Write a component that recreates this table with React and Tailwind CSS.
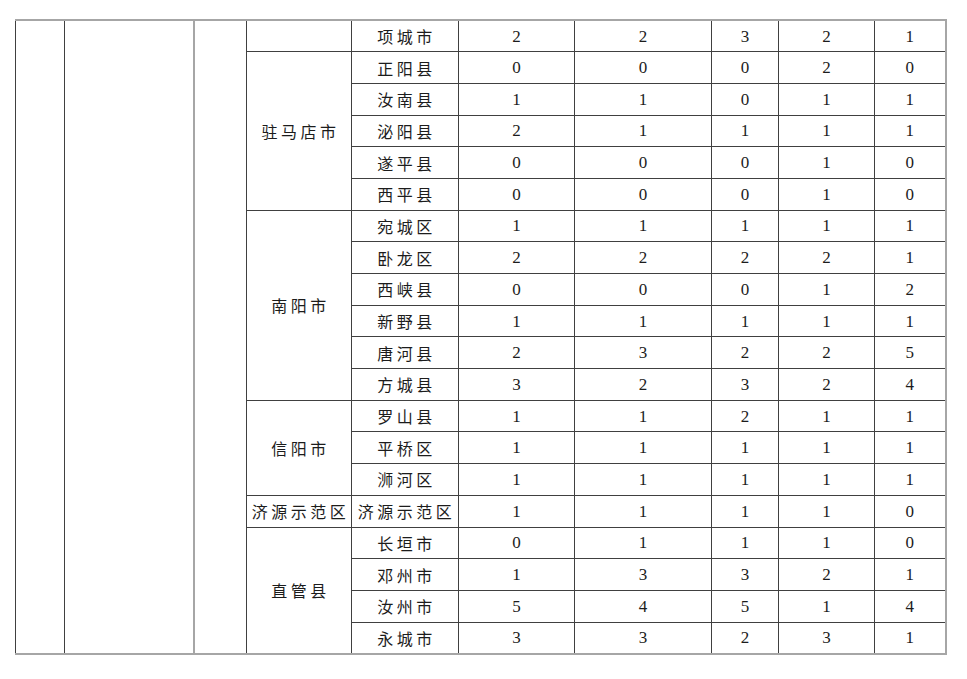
import React from "react";

const rows = [
  ["", 1, "项城市", [2, 2, 3, 2, 1]],
  ["驻马店市", 5, "正阳县", [0, 0, 0, 2, 0]],
  [null, 0, "汝南县", [1, 1, 0, 1, 1]],
  [null, 0, "泌阳县", [2, 1, 1, 1, 1]],
  [null, 0, "遂平县", [0, 0, 0, 1, 0]],
  [null, 0, "西平县", [0, 0, 0, 1, 0]],
  ["南阳市", 6, "宛城区", [1, 1, 1, 1, 1]],
  [null, 0, "卧龙区", [2, 2, 2, 2, 1]],
  [null, 0, "西峡县", [0, 0, 0, 1, 2]],
  [null, 0, "新野县", [1, 1, 1, 1, 1]],
  [null, 0, "唐河县", [2, 3, 2, 2, 5]],
  [null, 0, "方城县", [3, 2, 3, 2, 4]],
  ["信阳市", 3, "罗山县", [1, 1, 2, 1, 1]],
  [null, 0, "平桥区", [1, 1, 1, 1, 1]],
  [null, 0, "浉河区", [1, 1, 1, 1, 1]],
  ["济源示范区", 1, "济源示范区", [1, 1, 1, 1, 0]],
  ["直管县", 4, "长垣市", [0, 1, 1, 1, 0]],
  [null, 0, "邓州市", [1, 3, 3, 2, 1]],
  [null, 0, "汝州市", [5, 4, 5, 1, 4]],
  [null, 0, "永城市", [3, 3, 2, 3, 1]],
];

const cjk = { fontFamily: '"Noto Sans CJK SC", "Noto Sans", sans-serif' };
const num = { fontFamily: '"Liberation Serif", "DejaVu Serif", serif' };

export default function App() {
  const n = rows.length;
  return (
    <div className="w-[967px] h-[679px] bg-white pt-[19px] pl-[15px]">
      <table className="border-collapse table-fixed w-[930px] text-[#1c1c1c]">
        <colgroup>
          <col className="w-[49px]" />
          <col className="w-[129px]" />
          <col className="w-[53px]" />
          <col className="w-[105px]" />
          <col className="w-[107px]" />
          <col className="w-[116px]" />
          <col className="w-[137px]" />
          <col className="w-[67px]" />
          <col className="w-[96px]" />
          <col className="w-[71px]" />
        </colgroup>
        <tbody>
          {rows.map((r, i) => {
            const top = i === 0 ? "border-t-2 border-t-[#a6a6a6]" : "";
            const bot = i === n - 1 ? "border-b-2 border-b-[#a6a6a6]" : "";
            return (
              <tr key={i} className="h-[31.7px]">
                {i === 0 && (
                  <>
                    <td rowSpan={n} className="border border-[#404040] border-t-2 border-t-[#a6a6a6] border-b-2 border-b-[#a6a6a6]"></td>
                    <td rowSpan={n} className="border border-[#404040] border-t-2 border-t-[#a6a6a6] border-b-2 border-b-[#a6a6a6] border-r-2 border-r-[#a6a6a6]"></td>
                    <td rowSpan={n} className="border border-[#404040] border-t-2 border-t-[#a6a6a6] border-b-2 border-b-[#a6a6a6] border-l-2 border-l-[#a6a6a6]"></td>
                  </>
                )}
                {r[0] !== null && (
                  <td
                    rowSpan={r[1]}
                    style={cjk}
                    className={`border border-[#404040] ${top} ${i + r[1] === n ? "border-b-2 border-b-[#a6a6a6]" : ""} text-center text-[16px] tracking-[3.5px] pl-[3px] p-0 leading-none`}
                  >
                    {r[0]}
                  </td>
                )}
                <td
                  style={cjk}
                  className={`border border-[#404040] ${top} ${bot} text-center text-[16px] tracking-[3.5px] pl-[3px] p-0 leading-none`}
                >
                  {r[2]}
                </td>
                {r[3].map((v, j) => (
                  <td
                    key={j}
                    style={num}
                    className={`border border-[#404040] ${top} ${bot} ${j === 4 ? "border-r-2 border-r-[#a6a6a6]" : ""} text-center text-[17px] p-0 leading-none`}
                  >
                    {v}
                  </td>
                ))}
              </tr>
            );
          })}
        </tbody>
      </table>
    </div>
  );
}
